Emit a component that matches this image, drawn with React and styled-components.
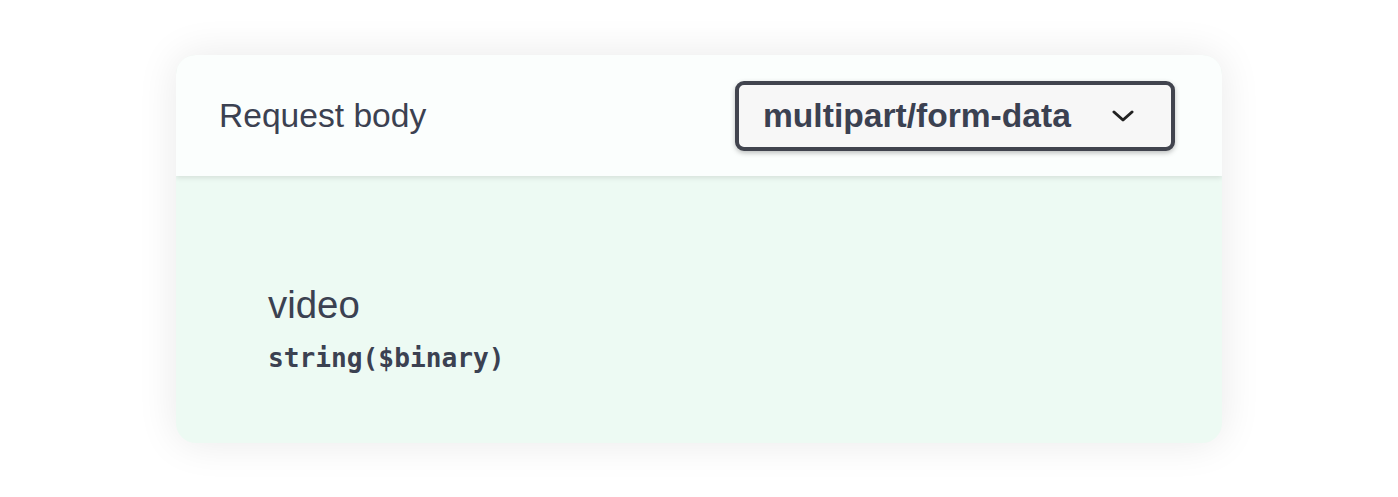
import React from 'react'
import styled, { createGlobalStyle } from 'styled-components'

const GlobalStyle = createGlobalStyle`
  html, body {
    margin: 0;
    padding: 0;
    background: #ffffff;
  }
  body {
    font-family: "Liberation Sans", Arial, sans-serif;
  }
`

const Page = styled.div`
  padding: 55px 176px 54px 176px;
`

const Card = styled.section`
  width: 1046px;
  border-radius: 20px;
  overflow: hidden;
  background: #edfaf3;
  box-shadow: 0 0 42px rgba(0, 0, 0, 0.09);
`

const Header = styled.div`
  height: 121px;
  box-sizing: border-box;
  padding: 0 47px 0 43px;
  display: flex;
  align-items: center;
  justify-content: space-between;
  background: #fbfefd;
  box-shadow: 0 2px 5px rgba(0, 0, 0, 0.1);
  position: relative;
`

const Title = styled.h4`
  margin: 0;
  font-size: 33.6px;
  font-weight: 400;
  color: #3b4151;
`

const Select = styled.div`
  width: 440px;
  height: 70px;
  box-sizing: border-box;
  border: 4px solid #41444e;
  border-radius: 9px;
  background: #f7f7f7;
  box-shadow: 0 2px 5px rgba(0, 0, 0, 0.25);
  padding: 0 37px 0 24px;
  display: flex;
  align-items: center;
  justify-content: space-between;
  font-size: 33.6px;
  font-weight: 700;
  color: #3b4151;
`

const Body = styled.div`
  height: 267px;
  box-sizing: border-box;
  padding: 110px 0 0 92px;
`

const ParamName = styled.div`
  font-size: 38.4px;
  line-height: 1;
  color: #3b4151;
`

const ParamType = styled.div`
  margin-top: 21px;
  font-family: "DejaVu Sans Mono", "Liberation Mono", monospace;
  font-size: 26.2px;
  font-weight: 700;
  line-height: 1;
  color: #3b4151;
`

const Chevron = () => (
  <svg width="22" height="12" viewBox="0 0 22 12" fill="none">
    <polyline points="2,2 11,10 20,2" stroke="#222" strokeWidth="3" strokeLinecap="round" strokeLinejoin="round" />
  </svg>
)

export default function App () {
  return (
    <Page>
      <GlobalStyle />
      <Card>
        <Header>
          <Title>Request body</Title>
          <Select>
            <span>multipart/form-data</span>
            <Chevron />
          </Select>
        </Header>
        <Body>
          <ParamName>video</ParamName>
          <ParamType>string($binary)</ParamType>
        </Body>
      </Card>
    </Page>
  )
}
